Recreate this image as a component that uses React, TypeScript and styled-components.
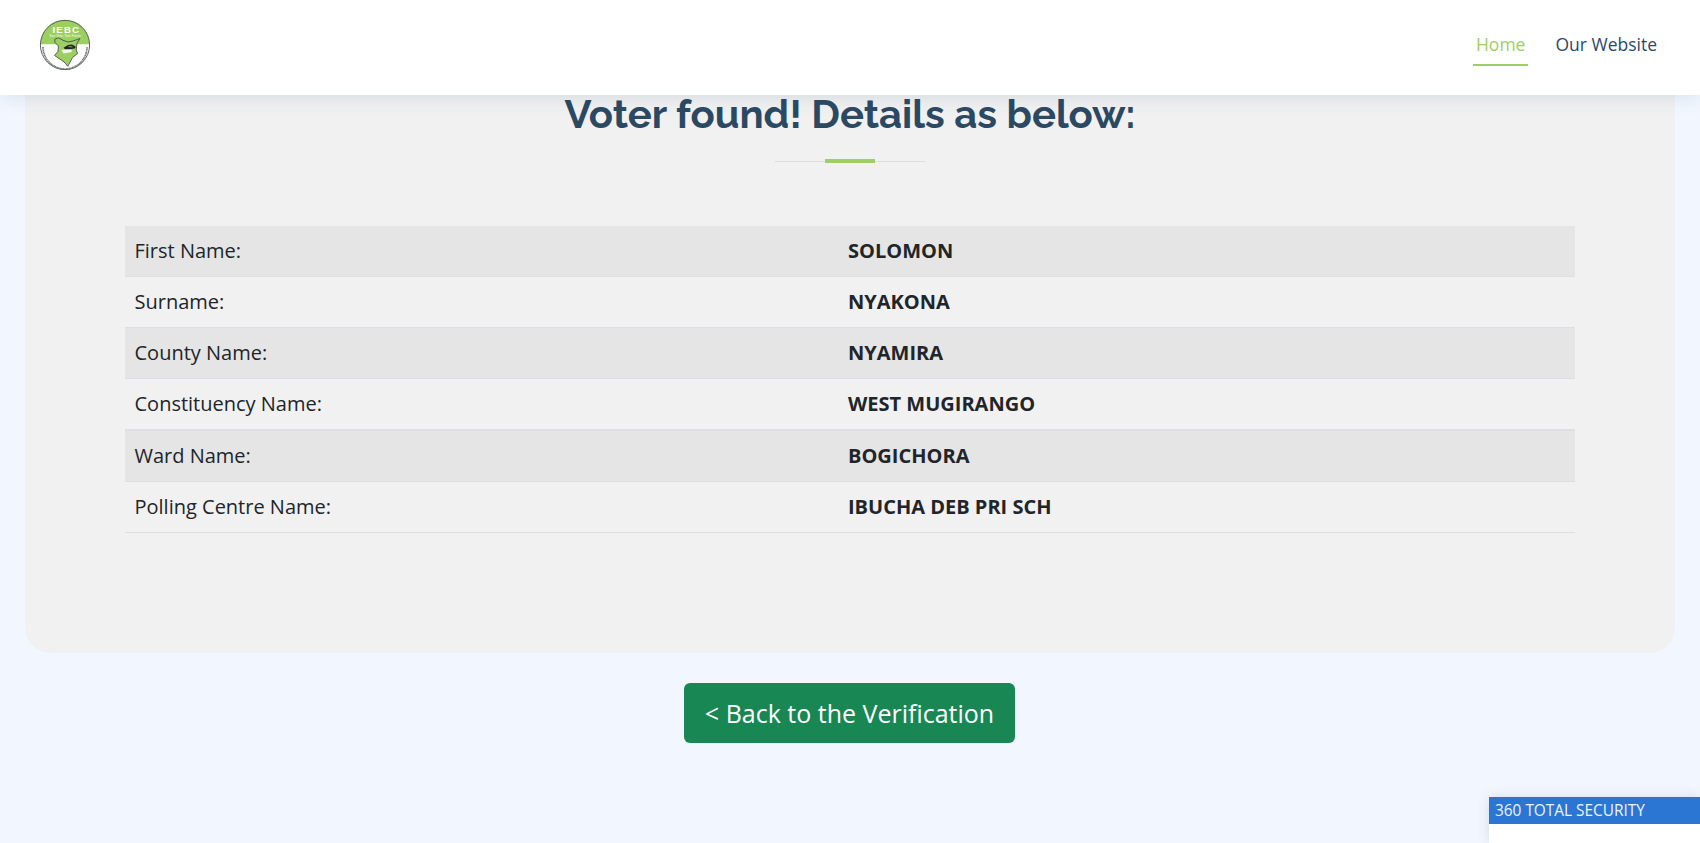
import React from "react";
import styled, { createGlobalStyle } from "styled-components";

const GlobalStyle = createGlobalStyle`
  *, *::before, *::after { box-sizing: border-box; }
  body {
    margin: 0;
    height: 843px;
    overflow: hidden;
    background: #f2f7ff;
    color: #212529;
    font-family: "Open Sans", "Liberation Sans", sans-serif;
  }
`;

const Page = styled.div`
  display: flex;
  flex-direction: column;
  height: 843px;
`;

const Header = styled.header`
  display: flex;
  flex: none;
  align-items: flex-start;
  justify-content: space-between;
  height: 95px;
  padding: 19px 40px 0 39px;
  background: #fff;
  box-shadow: 0 2px 19px rgba(18, 66, 101, 0.12);
  position: relative;
  z-index: 1;
`;

const Nav = styled.nav`
  display: flex;
  gap: 24px;
  padding-top: 9px;
`;

const NavLink = styled.a<{ $active?: boolean }>`
  height: 38px;
  padding: 0 3px;
  border-bottom: 2px solid ${(p) => (p.$active ? "#9fce67" : "transparent")};
  color: ${(p) => (p.$active ? "#9fce67" : "#2c4964")};
  font-size: 17.5px;
  line-height: 33px;
  white-space: nowrap;
`;

const Panel = styled.main`
  flex: none;
  height: 558px;
  margin: 0 25px;
  padding: 0 100px;
  border-radius: 0 0 25px 25px;
  background: #f1f1f1;
`;

const Title = styled.h2`
  height: 56px;
  margin: 0;
  color: #2c4964;
  font-family: Raleway, Lato, sans-serif;
  font-size: 40px;
  font-weight: 700;
  line-height: 38px;
  text-align: center;
  white-space: nowrap;
`;

const Divider = styled.div`
  display: flex;
  align-items: center;
  justify-content: center;
  height: 20px;
`;

const DividerLine = styled.span`
  width: 50px;
  height: 1px;
  background: #dcdcdc;
`;

const DividerAccent = styled.span`
  width: 50px;
  height: 4px;
  background: #9fce67;
`;

const Details = styled.dl`
  margin: 55px 0 0;
`;

const Row = styled.div<{ $striped: boolean; $thick: boolean }>`
  display: grid;
  grid-template-columns: 713px 1fr;
  height: ${(p) => (p.$thick ? 52 : 51)}px;
  border-bottom: ${(p) => (p.$thick ? 2 : 1)}px solid #dddfe2;
  background: ${(p) => (p.$striped ? "#e5e5e5" : "transparent")};
  font-size: 20px;
  line-height: 30px;
`;

const Label = styled.dt`
  padding: 10px 9.5px;
`;

const Value = styled.dd`
  margin: 0;
  padding: 10px;
  font-weight: 700;
`;

const Actions = styled.div`
  display: flex;
  justify-content: center;
  padding: 30px 1px 0 0;
`;

const BackButton = styled.button`
  width: 331px;
  height: 60px;
  padding: 0;
  border: 0;
  border-radius: 6px;
  background: #198754;
  color: #fff;
  font-family: inherit;
  font-size: 25px;
  line-height: 60px;
  white-space: nowrap;
`;

const Toast = styled.aside`
  position: fixed;
  right: 0;
  bottom: 0;
  width: 211px;
  height: 46px;
  background: #fff;
  box-shadow: 0 0 12px rgba(40, 60, 90, 0.14);
`;

const ToastTitle = styled.div`
  height: 27px;
  padding-left: 6px;
  background: #2b76d2;
  color: #eef4ff;
  font-size: 15.4px;
  line-height: 27px;
  white-space: nowrap;
`;

const Logo = () => (
  <svg width="52" height="52" viewBox="0 0 52 52" aria-label="IEBC">
    <circle cx="26" cy="26" r="24.6" fill="#fff" />
    <path d="M1.5 25.2A24.5 24.5 0 0 1 50.5 25.2Z" fill="#9bcf62" />
    <circle cx="26" cy="26" r="24.6" fill="none" stroke="#5c625c" strokeWidth="1" />
    <path
      d="M4 28A22 22 0 0 0 48 28"
      fill="none"
      stroke="#6f736f"
      strokeWidth="1.7"
      strokeDasharray="1.2 .4"
    />
    <path
      d="M15.8 20.2L19.5 18.8L24 21.3L29 23L34 22L41 19.5L38 24L37.2 31L38.6 34.5L33.5 38.5L28.8 47.3L25.2 43L15.5 36.4L19 32.5L19.4 27L16 23.5Z"
      fill="#9bcf62"
      stroke="#4c524c"
      strokeWidth=".9"
      strokeLinejoin="round"
    />
    <path d="M22.5 31L32 29.6L33 33L24.5 34.5Z" fill="#f4f6f2" />
    <path d="M24.5 28.8L29 26L33 25.5L36.3 27.2L36.5 29.2L31.5 30.3L26 30.3Z" fill="#202520" />
    <path d="M29.5 27.6L33.5 27.9" stroke="#9bcf62" strokeWidth=".8" />
    <text
      x="26.7"
      y="14"
      textAnchor="middle"
      fill="#fff"
      fontFamily="Liberation Sans, sans-serif"
      fontWeight="700"
      fontSize="9.6"
      textLength="26.5"
    >
      IEBC
    </text>
    <text
      x="26"
      y="17.8"
      textAnchor="middle"
      fill="#fff"
      fontFamily="Liberation Sans, sans-serif"
      fontSize="3.1"
      textLength="32"
    >
      Your Vote, Your Future
    </text>
  </svg>
);

const voter = [
  ["First Name:", "SOLOMON"],
  ["Surname:", "NYAKONA"],
  ["County Name:", "NYAMIRA"],
  ["Constituency Name:", "WEST MUGIRANGO"],
  ["Ward Name:", "BOGICHORA"],
  ["Polling Centre Name:", "IBUCHA DEB PRI SCH"],
];

export default function App() {
  return (
    <Page>
      <GlobalStyle />
      <Header>
        <Logo />
        <Nav>
          <NavLink $active>Home</NavLink>
          <NavLink>Our Website</NavLink>
        </Nav>
      </Header>
      <Panel>
        <Title>Voter found! Details as below:</Title>
        <Divider>
          <DividerLine />
          <DividerAccent />
          <DividerLine />
        </Divider>
        <Details>
          {voter.map(([label, value], i) => (
            <Row key={label} $striped={i % 2 === 0} $thick={i === 3}>
              <Label>{label}</Label>
              <Value>{value}</Value>
            </Row>
          ))}
        </Details>
      </Panel>
      <Actions>
        <BackButton>&lt; Back to the Verification</BackButton>
      </Actions>
      <Toast>
        <ToastTitle>360 TOTAL SECURITY</ToastTitle>
      </Toast>
    </Page>
  );
}
